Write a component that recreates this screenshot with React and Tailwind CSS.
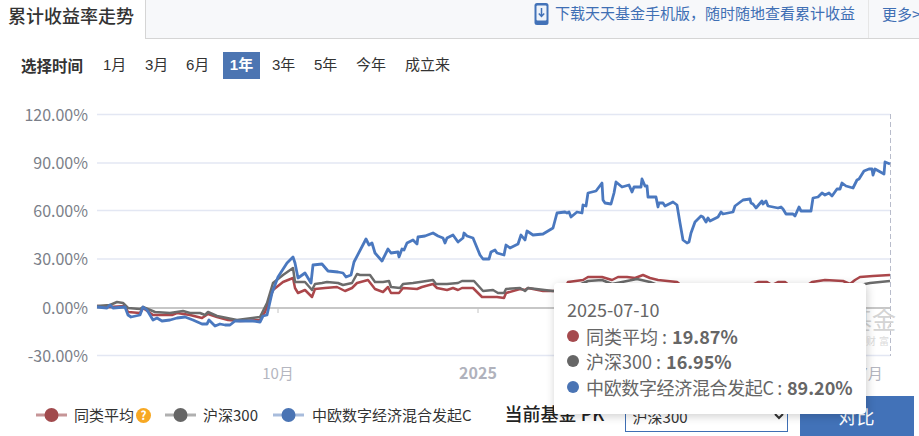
import React from "react";

const blue = "97,307 107,308 110,305 113,308 125,307 128,315 131,317 140,315 143,307 147,310 153,320 157,318 162,321 170,320 177,318 185,317 193,320 202,324 207,324 209,320 215,326 220,324 225,325 230,325 235,321 253,321 260,322 263,316 267,315 272,293 278,277 287,263 293,257 295,263 298,278 305,273 311,283 313,265 322,264 328,271 338,272 343,273 346,277 351,275 354,262 366,239 369,245 372,243 375,253 382,261 388,249 391,253 398,252 399,257 402,249 404,250 407,243 413,240 417,244 418,237 425,236 433,233 438,236 443,238 445,243 447,238 453,235 458,242 463,238 464,233 467,236 473,238 480,255 483,259 489,259 491,252 495,250 497,253 504,255 506,245 510,248 518,244 521,235 525,240 527,231 533,235 543,234 553,228 557,213 565,212 567,213 569,212 571,217 577,212 582,213 583,205 586,206 588,193 596,191 602,183 603,200 605,203 611,204 614,193 616,182 622,187 629,185 632,192 634,187 641,187 642,179 645,186 647,186 648,197 656,197 658,207 659,203 663,203 665,206 673,202 677,205 680,223 683,240 687,243 689,242 691,233 695,222 701,216 703,217 706,222 708,218 710,221 718,217 721,212 723,214 733,212 735,206 743,200 750,199 751,203 753,204 756,208 762,201 763,204 766,201 768,206 778,208 781,207 783,209 786,214 793,214 795,216 799,207 801,211 811,211 813,198 818,197 822,193 825,195 829,193 832,196 837,189 840,189 842,183 846,186 853,188 857,180 859,179 864,171 869,169 872,169 873,175 875,169 884,174 885,162 890,164";
const gray = "97,306 110,305 117,302 123,303 128,308 140,309 143,307 155,312 170,313 183,311 190,313 200,313 205,315 208,312 217,316 227,318 237,320 260,317 267,303 273,283 283,275 293,268 295,282 305,282 312,290 315,284 322,283 327,282 338,283 343,285 352,283 357,274 360,275 370,275 375,282 383,282 389,281 391,287 400,288 403,284 413,283 420,282 433,280 436,284 447,284 458,283 462,281 474,281 483,291 493,290 498,293 504,293 506,289 520,288 525,291 528,288 553,291 568,290 588,281 602,280 612,284 637,279 650,282 660,286 760,288 800,290 850,288 860,285 870,283 890,281";
const red = "97,306 110,307 125,306 128,312 140,313 143,308 153,315 172,315 177,313 190,315 202,318 208,314 217,317 228,320 240,321 260,320 265,312 273,290 283,282 293,278 295,288 298,293 305,290 312,297 315,289 325,288 337,287 345,291 352,288 357,283 368,280 375,289 383,292 388,287 391,293 399,293 403,288 417,289 422,287 433,284 437,288 447,290 453,288 458,290 462,288 473,288 482,297 490,297 497,297 504,298 506,293 520,289 525,290 528,288 543,291 556,291 564,290 568,282 583,280 588,277 602,277 612,280 618,277 627,277 635,278 643,275 650,278 658,280 677,282 682,286 750,286 758,282 767,282 772,285 778,282 785,282 790,286 806,286 812,282 825,280 843,281 850,284 855,280 860,277 873,276 890,275";

const gridYs = [114.5, 163, 210.5, 259, 355.5];
const yLabels = [["120.00%", 114.5], ["90.00%", 163], ["60.00%", 210.5], ["30.00%", 259], ["0.00%", 308], ["-30.00%", 356]];
const times = [["1月", "w-[42px]"], ["3月", "w-[41px]"], ["6月", "w-[37px]"]];
const times2 = [["3年", "w-[42px]"], ["5年", "w-[42px]"], ["今年", "w-[49px]"], ["成立来", "w-[60px]"]];
const CJK = "font-['Noto_Sans_CJK_SC',sans-serif]";
const MIX = "font-['Liberation_Sans','Noto_Sans_CJK_SC',sans-serif]";

function LegendMark({ color, pale }) {
  return (
    <svg width="31" height="14" viewBox="0 0 31 14" className="shrink-0 block">
      <line x1="0" y1="7" x2="31" y2="7" stroke={pale} strokeWidth="3" />
      <circle cx="15.5" cy="7" r="7" fill={color} />
    </svg>
  );
}

function TipRow({ color, name, value, tight }) {
  return (
    <div className="flex items-center h-[25.5px] whitespace-nowrap">
      <span className={`w-[12px] h-[12px] rounded-full mr-[7px] ${color}`} />
      <span className={tight ? "tracking-[-0.35px]" : ""}>{name} : </span>
      <span className="font-bold ml-[5px]">{value}</span>
    </div>
  );
}

export default function App() {
  return (
    <div className={`relative w-[919px] h-[436px] overflow-hidden bg-white ${CJK}`}>
      <div className="flex h-[39px]">
        <div className="w-[146px] shrink-0 border-r border-[#d5d5d5] pl-[8px] text-[18px] leading-[30px] font-medium text-[#333]">
          累计收益率走势
        </div>
        <div className="flex flex-1 bg-[#f7f8fa] border-b border-[#d5d5d5]">
          <div className="flex flex-1 justify-end items-start pt-[3px] pr-[13px]">
            <svg width="15" height="23" viewBox="0 0 15 23" className="mr-[6px] shrink-0">
              <rect x="0.5" y="0" width="14" height="22" rx="2.5" fill="#4272b8" />
              <rect x="2.5" y="2.5" width="10" height="15" rx="1" fill="#eef3fa" />
              <path d="M7.5 5v8M4.8 10.5l2.7 3 2.7-3" stroke="#4272b8" strokeWidth="1.5" fill="none" />
            </svg>
            <span className="text-[15px] leading-[20px] text-[#3f6fb4] whitespace-nowrap">下载天天基金手机版，随时随地查看累计收益</span>
          </div>
          <div className="w-[51px] shrink-0 border-l border-[#e6e6e6] pl-[13px] pt-[4px] text-[15px] leading-[20px] text-[#3f6fb4] whitespace-nowrap">
            更多&gt;
          </div>
        </div>
      </div>

      <div className={`flex items-center h-[27px] mt-[13px] pl-[21px] text-[15px] text-[#333] ${MIX}`}>
        <span className={`w-[72px] font-bold text-[15.5px] text-[#333] ${CJK}`}>选择时间</span>
        <div className="flex items-center h-full pl-[10px]">
          {times.map(([t, w]) => (
            <span key={t} className={`${w} whitespace-nowrap`}>{t}</span>
          ))}
          <span className="flex items-center justify-center w-[37px] h-[27px] bg-[#4c75b2] text-white font-bold">1年</span>
          <div className="flex items-center pl-[12px]">
            {times2.map(([t, w]) => (
              <span key={t} className={`${w} whitespace-nowrap`}>{t}</span>
            ))}
          </div>
        </div>
      </div>

      <svg width="919" height="296" viewBox="0 92 919 296" className="block mt-[13px]">
        {gridYs.map((y) => (
          <line key={y} x1="97" x2="890" y1={y} y2={y} stroke="#e3e7f3" strokeWidth="1.5" />
        ))}
        <line x1="97" x2="890" y1="308" y2="308" stroke="#b4b4b4" strokeWidth="1.5" />
        <line x1="278" x2="278" y1="308" y2="313" stroke="#c4c4c4" />
        <line x1="478" x2="478" y1="308" y2="313" stroke="#c4c4c4" />
        <line x1="890.5" x2="890.5" y1="114" y2="356" stroke="#b8bccb" strokeDasharray="5 3" />
        {yLabels.map(([t, y]) => (
          <text key={t} x="88" y={y + 6} textAnchor="end" fontSize="16" fill="#7b7f89">{t}</text>
        ))}
        <text x="278" y="379" textAnchor="middle" fontSize="15" fill="#b4b6c0">10月</text>
        <text x="478" y="379" textAnchor="middle" fontSize="16" fontWeight="700" fill="#b0b2bc">2025</text>
        <text x="871" y="379" textAnchor="middle" fontSize="15" fill="#b4b6c0">7月</text>
        <text x="896" y="329" textAnchor="end" fontSize="24" fill="#d4d4d4">天天基金</text>
        <text x="892" y="345" textAnchor="end" fontSize="10" letterSpacing="3" fill="#dcdcdc">投资财富</text>
        <polyline points={red} fill="none" stroke="#ab474b" strokeWidth="2.5" strokeLinejoin="round" />
        <polyline points={gray} fill="none" stroke="#6b6b6b" strokeWidth="2.5" strokeLinejoin="round" />
        <polyline points={blue} fill="none" stroke="#4a78bf" strokeWidth="2.8" strokeLinejoin="round" />
      </svg>

      <div className="flex items-start h-[48px] text-[15px] text-[#333]">
        <div className="flex items-center h-[18px] mt-[18px] pl-[36px] whitespace-nowrap">
          <LegendMark color="#a14a4d" pale="#c69597" />
          <span className="ml-[7px]">同类平均</span>
          <svg width="15" height="15" viewBox="0 0 14 14" className="ml-[2px] shrink-0">
            <circle cx="7" cy="7" r="7" fill="#f7a823" />
            <text x="7" y="11" textAnchor="middle" fontSize="11" fontWeight="700" fill="#fff">?</text>
          </svg>
          <span className="ml-[14px]"><LegendMark color="#666666" pale="#b0b0b0" /></span>
          <span className="ml-[7px]">沪深300</span>
          <span className="ml-[15px]"><LegendMark color="#4a74b4" pale="#a8bcdc" /></span>
          <span className="ml-[8px]">中欧数字经济混合发起C</span>
        </div>
        <div className="flex items-start ml-[33px]">
          <span className="w-[120px] pt-[12px] text-[18px] leading-[26px] font-medium text-[#222] whitespace-nowrap">当前基金 PK</span>
          <select className="w-[163px] h-[32px] mt-[12px] bg-white border border-[#3f6fb4] pl-[3px] text-[15px] text-[#333]">
            <option>沪深300</option>
          </select>
          <button className="w-[114px] h-[48px] mt-[8px] ml-[12px] pb-[8px] bg-[#4272b8] text-white text-[18px]">对比</button>
        </div>
      </div>

      <div className="absolute left-[554px] top-[283px] w-[312px] h-[131px] pt-[13px] pl-[13px] bg-white rounded-[4px] shadow-[1px_2px_10px_rgba(0,0,0,0.2)] text-[18px] leading-[26px] text-[#666]">
        <div className="h-[27px]">2025-07-10</div>
        <TipRow color="bg-[#a54a4e]" name="同类平均" value="19.87%" />
        <TipRow color="bg-[#666666]" name="沪深300" value="16.95%" />
        <TipRow color="bg-[#4a74b4]" name="中欧数字经济混合发起C" value="89.20%" tight />
      </div>
    </div>
  );
}
